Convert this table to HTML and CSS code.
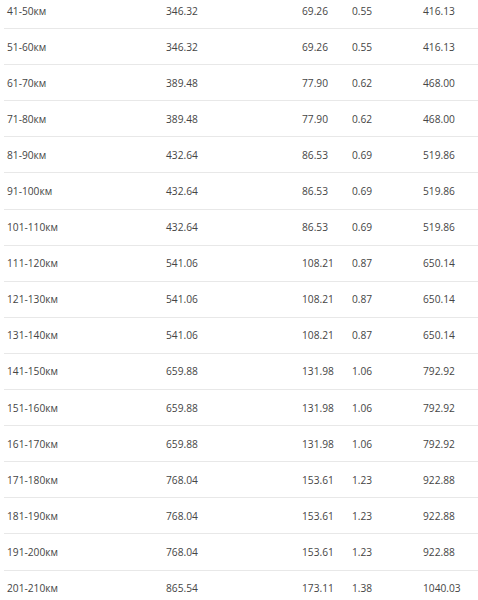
FILE: index.html
```html
<!DOCTYPE html>
<html>
<head>
<meta charset="utf-8">
<link rel="stylesheet" href="styles.css">
</head>
<body>
<div class="table">
<div class="row"><span>41-50км</span><span>346.32</span><span>69.26</span><span>0.55</span><span>416.13</span></div>
<div class="row"><span>51-60км</span><span>346.32</span><span>69.26</span><span>0.55</span><span>416.13</span></div>
<div class="row"><span>61-70км</span><span>389.48</span><span>77.90</span><span>0.62</span><span>468.00</span></div>
<div class="row"><span>71-80км</span><span>389.48</span><span>77.90</span><span>0.62</span><span>468.00</span></div>
<div class="row"><span>81-90км</span><span>432.64</span><span>86.53</span><span>0.69</span><span>519.86</span></div>
<div class="row"><span>91-100км</span><span>432.64</span><span>86.53</span><span>0.69</span><span>519.86</span></div>
<div class="row"><span>101-110км</span><span>432.64</span><span>86.53</span><span>0.69</span><span>519.86</span></div>
<div class="row"><span>111-120км</span><span>541.06</span><span>108.21</span><span>0.87</span><span>650.14</span></div>
<div class="row"><span>121-130км</span><span>541.06</span><span>108.21</span><span>0.87</span><span>650.14</span></div>
<div class="row"><span>131-140км</span><span>541.06</span><span>108.21</span><span>0.87</span><span>650.14</span></div>
<div class="row"><span>141-150км</span><span>659.88</span><span>131.98</span><span>1.06</span><span>792.92</span></div>
<div class="row"><span>151-160км</span><span>659.88</span><span>131.98</span><span>1.06</span><span>792.92</span></div>
<div class="row"><span>161-170км</span><span>659.88</span><span>131.98</span><span>1.06</span><span>792.92</span></div>
<div class="row"><span>171-180км</span><span>768.04</span><span>153.61</span><span>1.23</span><span>922.88</span></div>
<div class="row"><span>181-190км</span><span>768.04</span><span>153.61</span><span>1.23</span><span>922.88</span></div>
<div class="row"><span>191-200км</span><span>768.04</span><span>153.61</span><span>1.23</span><span>922.88</span></div>
<div class="row"><span>201-210км</span><span>865.54</span><span>173.11</span><span>1.38</span><span>1040.03</span></div>
</div>
</body>
</html>
```
FILE: styles.css
```css
html, body {
  margin: 0;
  padding: 0;
  background: #ffffff;
}
body {
  font-family: "Open Sans", "Liberation Sans", sans-serif;
  font-size: 10.2px;
  color: #454545;
  overflow: hidden;
}
.table {
  margin-top: -7px;
  margin-left: 4px;
}
.row {
  display: grid;
  grid-template-columns: 159px 136px 50px 71px 1fr;
  align-items: center;
  height: 35.1px;
  padding-left: 3px;
  border-bottom: 1px solid #e8e8e8;
}
```
